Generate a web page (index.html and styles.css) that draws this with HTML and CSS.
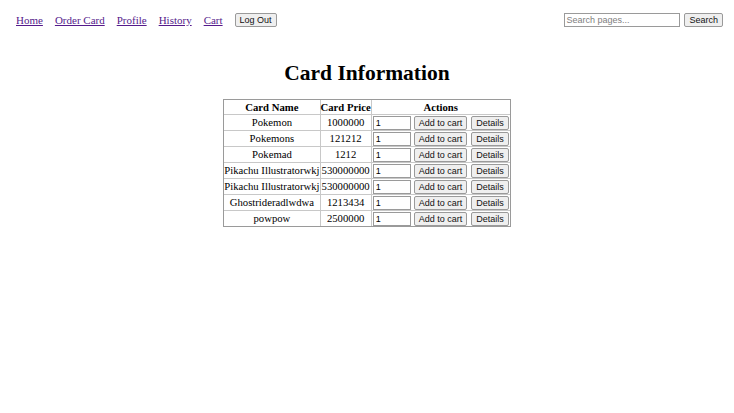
FILE: index.html
```html
<!DOCTYPE html>
<html>
<head>
<meta charset="utf-8">
<link rel="stylesheet" href="styles.css">
</head>
<body>
<nav class="topbar">
  <div class="links">
    <a href="#">Home</a>
    <a href="#">Order Card</a>
    <a href="#">Profile</a>
    <a href="#">History</a>
    <a href="#">Cart</a>
    <button class="btn">Log Out</button>
  </div>
  <form class="search">
    <input class="search-input" type="text" placeholder="Search pages...">
    <button class="btn" type="button">Search</button>
  </form>
</nav>
<h1 class="title">Card Information</h1>
<table class="cards">
  <thead>
    <tr><th>Card Name</th><th>Card Price</th><th colspan="3">Actions</th></tr>
  </thead>
  <tbody>
    <tr><td>Pokemon</td><td>1000000</td><td class="qty"><input class="qty-input" value="1"></td><td class="act"><button class="btn">Add to cart</button></td><td class="act"><button class="btn">Details</button></td></tr>
    <tr><td>Pokemons</td><td>121212</td><td class="qty"><input class="qty-input" value="1"></td><td class="act"><button class="btn">Add to cart</button></td><td class="act"><button class="btn">Details</button></td></tr>
    <tr><td>Pokemad</td><td>1212</td><td class="qty"><input class="qty-input" value="1"></td><td class="act"><button class="btn">Add to cart</button></td><td class="act"><button class="btn">Details</button></td></tr>
    <tr><td>Pikachu Illustratorwkj</td><td>530000000</td><td class="qty"><input class="qty-input" value="1"></td><td class="act"><button class="btn">Add to cart</button></td><td class="act"><button class="btn">Details</button></td></tr>
    <tr><td>Pikachu Illustratorwkj</td><td>530000000</td><td class="qty"><input class="qty-input" value="1"></td><td class="act"><button class="btn">Add to cart</button></td><td class="act"><button class="btn">Details</button></td></tr>
    <tr><td>Ghostrideradlwdwa</td><td>1213434</td><td class="qty"><input class="qty-input" value="1"></td><td class="act"><button class="btn">Add to cart</button></td><td class="act"><button class="btn">Details</button></td></tr>
    <tr><td>powpow</td><td>2500000</td><td class="qty"><input class="qty-input" value="1"></td><td class="act"><button class="btn">Add to cart</button></td><td class="act"><button class="btn">Details</button></td></tr>
  </tbody>
</table>
</body>
</html>
```
FILE: styles.css
```css
html, body {
  margin: 0;
  background: #ffffff;
}
body {
  font-family: "Liberation Serif", "Times New Roman", serif;
  font-size: 11px;
  color: #000;
}
.topbar {
  display: flex;
  justify-content: space-between;
  align-items: center;
  padding: 13px 11px 0 16px;
  height: 14px;
}
.links {
  display: flex;
  align-items: center;
  gap: 12px;
}
.links a {
  color: #551a8b;
  text-decoration: underline;
  font-size: 11px;
}
.btn {
  font-family: "Liberation Sans", Arial, sans-serif;
  font-size: 9px;
  height: 14px;
  padding: 0 4px;
  background: #efefef;
  border: 1px solid #9a9a9a;
  border-radius: 2px;
  color: #111;
  line-height: 12px;
}
.search {
  display: flex;
  align-items: center;
  gap: 4px;
  margin: 0;
}
.search-input {
  width: 116px;
  height: 14px;
  box-sizing: border-box;
  border: 1px solid #9a9a9a;
  font-family: "Liberation Sans", Arial, sans-serif;
  font-size: 9px;
  padding: 0 1px;
}
.search-input::placeholder {
  color: #808080;
}
.title {
  text-align: center;
  font-size: 21.5px;
  font-weight: bold;
  margin: 34px 0 14px;
  line-height: 24px;
}
.cards {
  margin: 0 auto;
  border: 1px solid #9a9a9a;
  border-collapse: separate;
  border-spacing: 0;
  font-size: 10.7px;
}
.cards th, .cards td {
  border: 1px solid #c8c8c8;
  border-width: 0 1px 1px 0;
  text-align: center;
  padding: 0;
  height: 15px;
  line-height: 13px;
  white-space: nowrap;
}
.cards th {
  font-weight: bold;
  height: 14px;
  line-height: 12px;
}
.cards tr > :last-child {
  border-right: 0;
}
.cards tbody tr:last-child td {
  border-bottom: 0;
}
.cards td.qty, .cards td.act {
  border-right: 0;
}
.cards td.qty {
  padding: 0 0 0 1px;
}
.cards td.act {
  padding: 0 1px 0 3px;
}
.qty-input {
  width: 38px;
  height: 14px;
  box-sizing: border-box;
  border: 1px solid #9a9a9a;
  font-family: "Liberation Sans", Arial, sans-serif;
  font-size: 9px;
  padding: 0 2px;
  display: block;
}
.cards .btn {
  display: block;
  height: 14px;
}
```
